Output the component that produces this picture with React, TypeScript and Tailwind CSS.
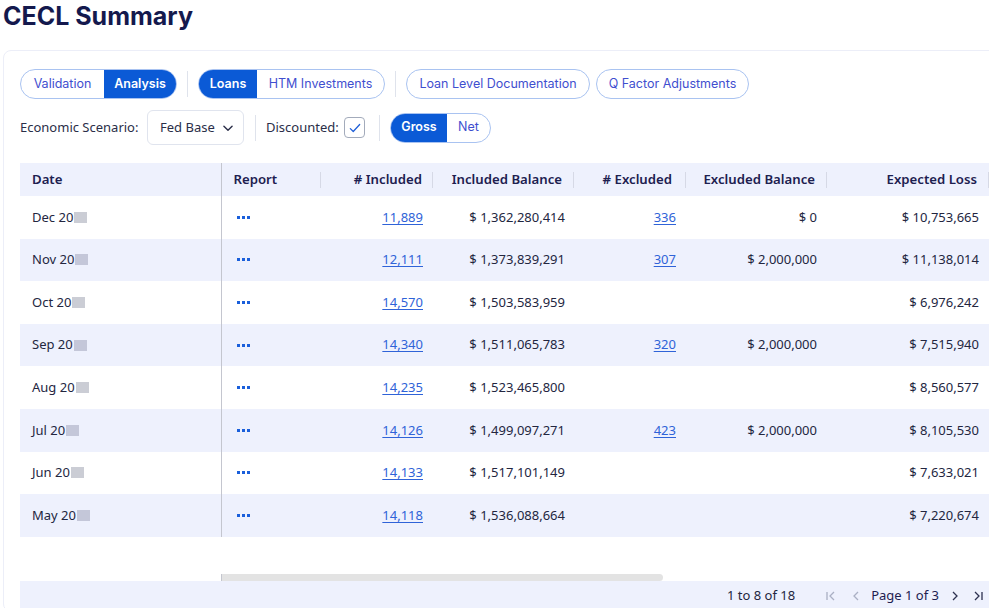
import React from 'react';

type Row = {
  date: string;
  included: string;
  includedBalance: string;
  excluded?: string;
  excludedBalance?: string;
  expectedLoss: string;
};

const rows: Row[] = [
  { date: 'Dec 20', included: '11,889', includedBalance: '$ 1,362,280,414', excluded: '336', excludedBalance: '$ 0', expectedLoss: '$ 10,753,665' },
  { date: 'Nov 20', included: '12,111', includedBalance: '$ 1,373,839,291', excluded: '307', excludedBalance: '$ 2,000,000', expectedLoss: '$ 11,138,014' },
  { date: 'Oct 20', included: '14,570', includedBalance: '$ 1,503,583,959', expectedLoss: '$ 6,976,242' },
  { date: 'Sep 20', included: '14,340', includedBalance: '$ 1,511,065,783', excluded: '320', excludedBalance: '$ 2,000,000', expectedLoss: '$ 7,515,940' },
  { date: 'Aug 20', included: '14,235', includedBalance: '$ 1,523,465,800', expectedLoss: '$ 8,560,577' },
  { date: 'Jul 20', included: '14,126', includedBalance: '$ 1,499,097,271', excluded: '423', excludedBalance: '$ 2,000,000', expectedLoss: '$ 8,105,530' },
  { date: 'Jun 20', included: '14,133', includedBalance: '$ 1,517,101,149', expectedLoss: '$ 7,633,021' },
  { date: 'May 20', included: '14,118', includedBalance: '$ 1,536,088,664', expectedLoss: '$ 7,220,674' },
];

const uiFont = { fontFamily: 'Inter, "Noto Sans", sans-serif' };
const tableFont = { fontFamily: '"Noto Sans", "Open Sans", sans-serif' };

function Segmented({ items, active }: { items: { label: string; w: string }[]; active: number }) {
  return (
    <div className="flex h-[30px] rounded-full border border-[#a9c3f1] overflow-hidden">
      {items.map((it, i) => (
        <button
          key={it.label}
          className={`${it.w} h-full text-[12.5px] ${
            i === active ? 'bg-[#0b5ad6] text-white font-semibold' : 'text-[#3f4fcf]'
          }`}
        >
          {it.label}
        </button>
      ))}
    </div>
  );
}

function Divider() {
  return <div className="w-px h-[26px] bg-[#dfe3ec]" />;
}

function HeaderSep() {
  return <span className="absolute right-0 top-[9px] h-[16px] w-px bg-[#d6d9e6]" />;
}

function Dots() {
  return (
    <span className="flex gap-[2px]">
      <span className="w-[3px] h-[3px] bg-[#1a5fdb]" />
      <span className="w-[3px] h-[3px] bg-[#1a5fdb]" />
      <span className="w-[3px] h-[3px] bg-[#1a5fdb]" />
    </span>
  );
}

function App(): JSX.Element {
  return (
    <div className="w-[989px] h-[608px] overflow-hidden bg-white">
      <h1 className="pl-[3px] text-[25px] leading-[32px] font-bold text-[#14194d]" style={uiFont}>
        CECL Summary
      </h1>

      <div className="ml-[3px] mt-[18px] w-[1100px] border border-[#eceef8] rounded-lg pl-[16px] pt-[18px]">
        {/* Toggles row */}
        <div className="flex items-center gap-[10px]" style={uiFont}>
          <Segmented
            active={1}
            items={[
              { label: 'Validation', w: 'w-[83px]' },
              { label: 'Analysis', w: 'w-[72px]' },
            ]}
          />
          <Divider />
          <Segmented
            active={0}
            items={[
              { label: 'Loans', w: 'w-[58px]' },
              { label: 'HTM Investments', w: 'w-[127px]' },
            ]}
          />
          <Divider />
          <button className="h-[30px] w-[184px] rounded-full border border-[#a9c3f1] text-[12.5px] text-[#3f4fcf]">
            Loan Level Documentation
          </button>
          <button className="-ml-[4px] h-[30px] w-[153px] rounded-full border border-[#a9c3f1] text-[12.5px] text-[#3f4fcf]">
            Q Factor Adjustments
          </button>
        </div>

        {/* Filters row */}
        <div className="mt-[11px] flex items-center text-[13px] text-[#2a2e48]" style={tableFont}>
          <span className="w-[120px]">Economic Scenario:</span>
          <div className="ml-[7px] flex h-[35px] w-[97px] items-center justify-between rounded-md border border-[#e0e4ee] pl-[12px] pr-[8px]">
            <span>Fed Base</span>
            <svg width="14" height="14" viewBox="0 0 24 24" fill="none" stroke="#2a2e48" strokeWidth="2.4" strokeLinecap="round" strokeLinejoin="round">
              <path d="M5 9l7 7 7-7" />
            </svg>
          </div>
          <div className="ml-[11px]"><Divider /></div>
          <span className="ml-[10px] w-[72px]">Discounted:</span>
          <span className="ml-[6px] flex h-[21px] w-[21px] items-center justify-center rounded-[4px] border border-[#a3abbb]">
            <svg width="14" height="14" viewBox="0 0 24 24" fill="none" stroke="#1f5fd8" strokeWidth="2.2" strokeLinecap="round" strokeLinejoin="round">
              <path d="M4 13l5 5L20 6" />
            </svg>
          </span>
          <div className="ml-[14px]"><Divider /></div>
          <div className="ml-[10px]" style={uiFont}>
            <Segmented
              active={0}
              items={[
                { label: 'Gross', w: 'w-[56px]' },
                { label: 'Net', w: 'w-[43px]' },
              ]}
            />
          </div>
        </div>

        {/* Table */}
        <div className="mt-[18px] text-[13px] text-[#23263f]" style={tableFont}>
          <table className="w-[1070px] table-fixed border-collapse">
            <colgroup>
              <col className="w-[201px]" />
              <col className="w-[100px]" />
              <col className="w-[112px]" />
              <col className="w-[141px]" />
              <col className="w-[112px]" />
              <col className="w-[141px]" />
              <col className="w-[162px]" />
              <col className="w-[101px]" />
            </colgroup>
            <thead>
              <tr className="h-[33px] bg-[#eef1fd] text-[13.2px] text-[#1d2050]">
                <th className="relative border-r border-[#c4c6cf] pl-[12px] text-left font-semibold">Date</th>
                <th className="relative pl-[12px] text-left font-semibold">Report<HeaderSep /></th>
                <th className="relative pr-[11px] text-right font-semibold"># Included<HeaderSep /></th>
                <th className="relative pr-[12px] text-right font-semibold">Included Balance<HeaderSep /></th>
                <th className="relative pr-[14px] text-right font-semibold"># Excluded<HeaderSep /></th>
                <th className="relative pr-[12px] text-right font-semibold">Excluded Balance<HeaderSep /></th>
                <th className="relative pr-[12px] text-right font-semibold">Expected Loss<HeaderSep /></th>
                <th />
              </tr>
            </thead>
            <tbody>
              {rows.map((r, i) => (
                <tr key={r.date} className={`h-[42.6px] ${i % 2 === 1 ? 'bg-[#eef1fd]' : 'bg-white'}`}>
                  <td className="border-r border-[#c4c6cf] pl-[12px]">
                    <span className="flex items-center">
                      {r.date}
                      <span className={`ml-px inline-block h-[11px] w-[13px] ${i % 2 === 1 ? 'bg-[#c4c7d9]' : 'bg-[#cbcdd5]'}`} />
                    </span>
                  </td>
                  <td className="pl-[15px]">
                    <Dots />
                  </td>
                  <td className="pr-[10px] text-right">
                    <a href="#" className="text-[#2f63d8] underline underline-offset-2">{r.included}</a>
                  </td>
                  <td className="pr-[9px] text-right">{r.includedBalance}</td>
                  <td className="pr-[10px] text-right">
                    {r.excluded && (
                      <a href="#" className="text-[#2f63d8] underline underline-offset-2">{r.excluded}</a>
                    )}
                  </td>
                  <td className="pr-[10px] text-right">{r.excludedBalance}</td>
                  <td className="pr-[10px] text-right">{r.expectedLoss}</td>
                  <td />
                </tr>
              ))}
            </tbody>
          </table>

          {/* Horizontal scrollbar */}
          <div className="mt-[37px] flex h-[7px] items-stretch">
            <div className="w-[201px]" />
            <div className="w-px bg-[#c4c6cf]" />
            <div className="w-[441px] rounded-r-full bg-[#e3e3e3]" />
          </div>

          {/* Footer / pagination */}
          <div className="flex h-[30px] items-center bg-[#eef1fd] pl-[707px] text-[13px] text-[#23263f]">
            <span>1 to 8 of 18</span>
            <span className="ml-[30px] flex items-center gap-[13px]">
              <svg width="12" height="12" viewBox="0 0 12 12" fill="none" stroke="#aab0c4" strokeWidth="1.3">
                <path d="M2 2v8M9 2L5 6l4 4" />
              </svg>
              <svg width="12" height="12" viewBox="0 0 12 12" fill="none" stroke="#aab0c4" strokeWidth="1.3">
                <path d="M8 2L4 6l4 4" />
              </svg>
            </span>
            <span className="ml-[9px] text-[#1d2050]">Page 1 of 3</span>
            <span className="ml-[10px] flex items-center gap-[11px]">
              <svg width="12" height="12" viewBox="0 0 12 12" fill="none" stroke="#2d3150" strokeWidth="1.3">
                <path d="M4 2l4 4-4 4" />
              </svg>
              <svg width="12" height="12" viewBox="0 0 12 12" fill="none" stroke="#2d3150" strokeWidth="1.3">
                <path d="M3 2l4 4-4 4M10 2v8" />
              </svg>
            </span>
          </div>
        </div>
      </div>
    </div>
  );
}

export default App;
